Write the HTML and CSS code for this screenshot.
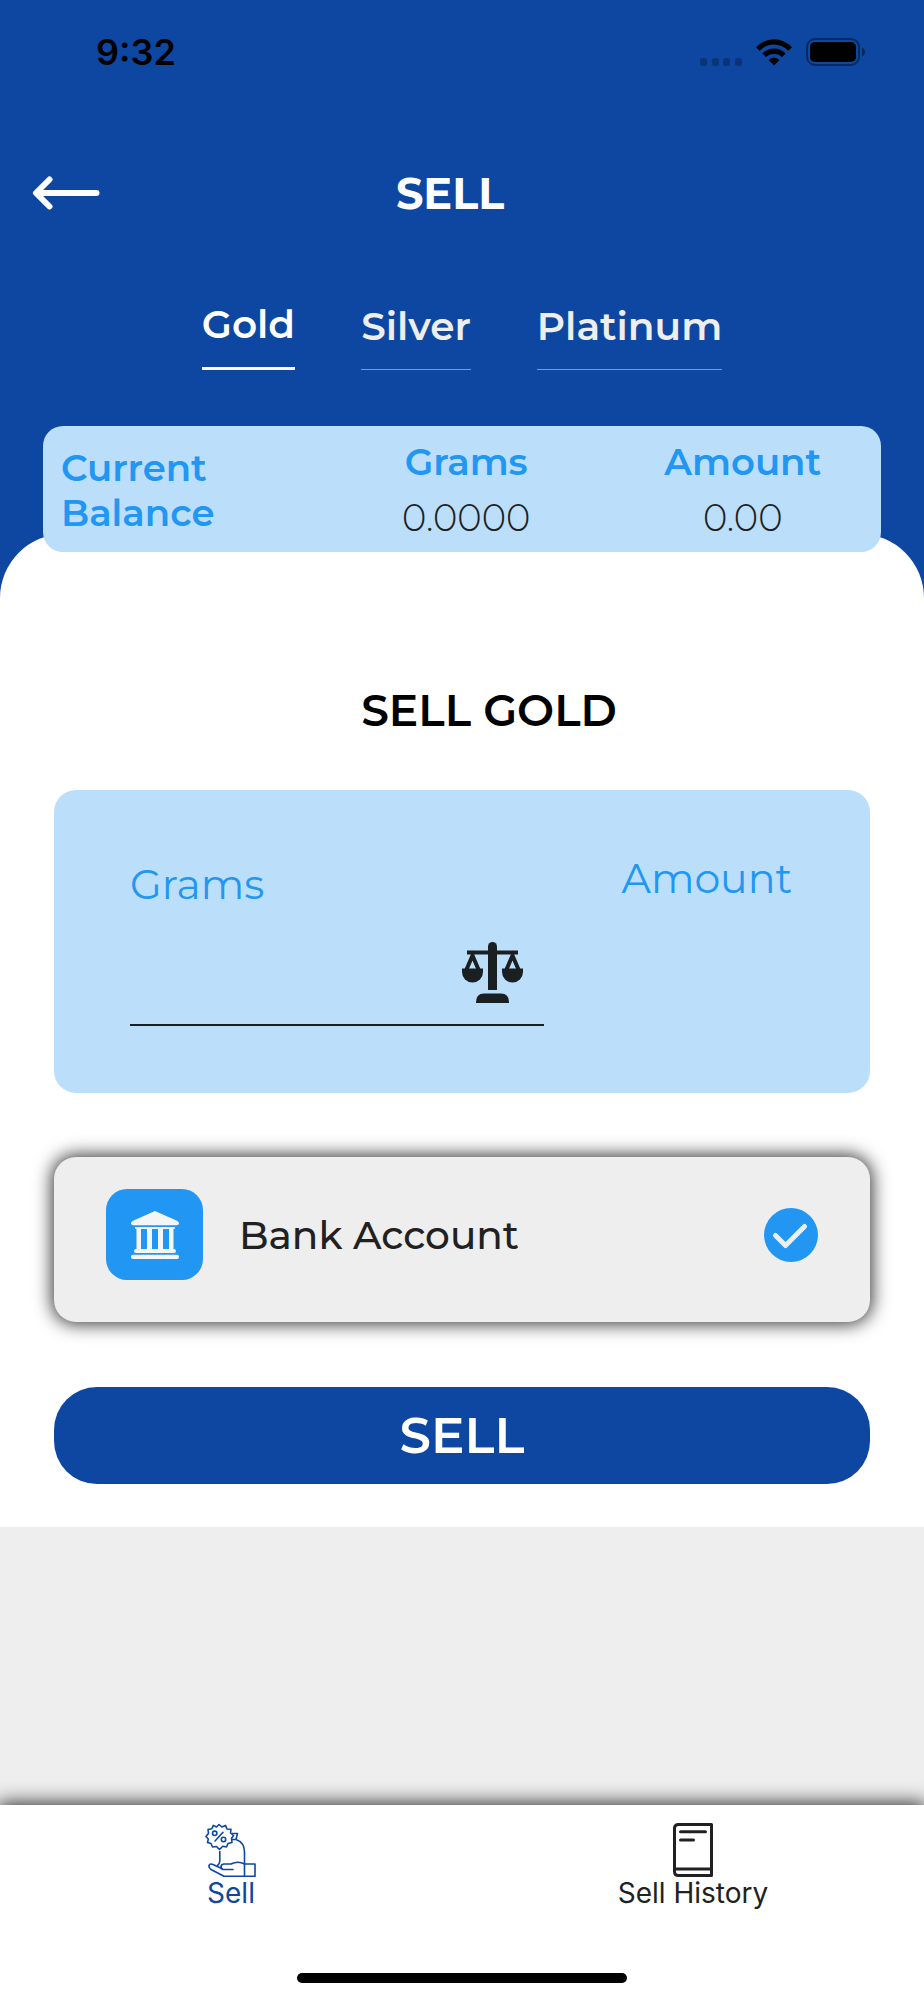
FILE: index.html
```html
<!DOCTYPE html>
<html lang="en">
<head>
  <meta charset="UTF-8">
  <title>Sell</title>
  <meta name="viewport" content="width=device-width, initial-scale=1.0">
  <link rel="stylesheet" href="styles.css">
</head>
<body>

  <header class="hero">
    <div class="status-bar">
      <span class="time">9:32</span>
      <div class="status-icons">
        <svg class="signal" width="42" height="8" viewBox="0 0 42 8">
          <rect x="0" y="0" width="7" height="8" rx="2.5"/>
          <rect x="12" y="0" width="7" height="8" rx="2.5"/>
          <rect x="23" y="0" width="7" height="8" rx="2.5"/>
          <rect x="35" y="0" width="7" height="8" rx="2.5"/>
        </svg>
        <svg width="36" height="27" viewBox="0 0 36 27">
          <path d="M0 8.2 Q8 0.3 18 0.3 T36 8.2 L32.3 11.8 Q26 5.6 18 5.6 T3.7 11.8 Z"/>
          <path d="M6.3 14.4 Q11.5 9.4 18 9.4 T29.7 14.4 L26 18 Q22.5 14.8 18 14.8 T10 18 Z"/>
          <path d="M12.6 20.9 Q15 18.4 18 18.4 T23.4 20.9 L18 26.5 Z"/>
        </svg>
        <svg width="60" height="28" viewBox="0 0 60 28">
          <rect class="battery-case" x="1" y="1" width="52" height="26" rx="8"/>
          <rect x="4" y="4" width="46" height="20" rx="5"/>
          <path class="battery-tip" d="M56 9.5 Q59 11 59 14 T56 18.5 Z"/>
        </svg>
      </div>
    </div>

    <div class="title-bar">
      <a class="back" href="#" aria-label="Back">
        <svg width="68" height="34" viewBox="0 0 68 34">
          <path d="M17.5 3.5 L4 17 L17.5 30.5 M5 17 H64.5"/>
        </svg>
      </a>
      <h1>SELL</h1>
    </div>

    <nav class="metals">
      <a class="active" href="#">Gold</a>
      <a href="#">Silver</a>
      <a href="#">Platinum</a>
    </nav>

    <section class="balance">
      <h2>Current Balance</h2>
      <div class="balance-item">
        <h3>Grams</h3>
        <p>0.0000</p>
      </div>
      <div class="balance-item">
        <h3>Amount</h3>
        <p>0.00</p>
      </div>
    </section>
  </header>

  <main class="sheet">
    <h2 class="sheet-title">SELL GOLD</h2>

    <form>
      <div class="quantity">
        <div class="grams">
          <label for="grams">Grams</label>
          <div class="grams-field">
            <input type="text" id="grams" inputmode="decimal">
            <svg width="61" height="61" viewBox="0 0 61 61">
              <path d="M26 4.5 a4.5 4.5 0 0 1 9 0 V48 H26 Z"/>
              <rect x="5" y="8.5" width="51" height="4"/>
              <path class="chain" d="M4.5 27.5 L10.5 13.5 L16.5 27.5 M44.5 27.5 L50.5 13.5 L56.5 27.5"/>
              <path d="M0 26.5 H21 V30 a10.5 10.5 0 0 1 -21 0 Z"/>
              <path d="M40 26.5 H61 V30 a10.5 10.5 0 0 1 -21 0 Z"/>
              <path d="M14 61 V60 Q14 51.5 22 51.5 H39 Q47 51.5 47 60 V61 Z"/>
            </svg>
          </div>
        </div>
        <div class="amount">
          <label for="amount">Amount</label>
          <output id="amount" for="grams"></output>
        </div>
      </div>

      <label class="account">
        <span class="account-icon">
          <svg width="48" height="48" viewBox="0 0 48 48">
            <path d="M24 0 L46 9.8 Q48 10.8 48 12.3 Q48 14.3 45.5 14.3 H2.5 Q0 14.3 0 12.3 Q0 10.8 2 9.8 Z"/>
            <path d="M4 16 H44 V17 Q44 18 42.5 18 V38 H43 a2 2 0 0 1 0 4 H5 a2 2 0 0 1 0 -4 H5.5 V18 Q4 18 4 17 Z M10 18 V38 H16 V18 Z M21 18 V38 H27 V18 Z M32 18 V38 H38 V18 Z" fill-rule="evenodd"/>
            <rect x="0" y="43.7" width="48" height="4.3" rx="2.1"/>
          </svg>
        </span>
        <span class="account-name">Bank Account</span>
        <span class="check">
          <input type="checkbox" checked>
          <svg width="54" height="54" viewBox="0 0 54 54">
            <path d="M11.5 27.5 L21.5 37.5 L40.5 18.5"/>
          </svg>
        </span>
      </label>

      <button class="sell-button" type="button">SELL</button>
    </form>
  </main>

  <footer class="tab-bar">
    <nav class="tabs">
      <a class="active" href="#">
        <svg width="52" height="54" viewBox="0 0 52 54">
          <path d="M14 1.5 L17 4 L20.5 2.4 L22 6 L26 6.3 L25.5 10 L28.5 12.5 L26.5 15.5 L27 19.5 L23 20.5 L21.5 24 L17.8 23.3 L14.5 26.5 L11.5 23.5 L7.5 24 L6 20.5 L2.5 19.5 L3.3 16 L1 13.5 L3.5 10.3 L3 6.5 L6.8 5.8 L8.3 2.4 L11.5 4 Z"/>
          <circle cx="9.7" cy="10.3" r="2.2"/>
          <circle cx="18.5" cy="16.5" r="2.2"/>
          <path d="M18 9.3 L10 18"/>
          <path d="M27 10.5 H32.5 L31 16.5 H27.5 M31 16.5 Q39.5 19.5 39.5 29 V53"/>
          <path d="M14.8 28.5 V38 Q14.8 41 12.5 42.5"/>
          <path d="M28 46.5 H18 Q16 45.5 16 43.5 Q16.5 41 19 41 H26 Q33 37.5 39.5 41 H50 V53.3 H19 L6 46.5 Q3.5 44.5 4 42.5 Q5 40 8 41.5 L14.5 44.5 Q16 45.8 18 46.5"/>
        </svg>
        Sell
      </a>
      <a href="#">
        <svg width="40" height="54" viewBox="0 0 40 54">
          <path class="book" d="M38.5 1.5 H5.5 Q1.5 1.5 1.5 5.5 V48.5 Q1.5 52.5 5.5 52.5 H38.5 Z M1.5 46 H38.5 M7.5 8.7 H32.5 M7.5 17 H20.5"/>
        </svg>
        Sell History
      </a>
    </nav>
    <div class="home-indicator"></div>
  </footer>

</body>
</html>
```

FILE: styles.css
```css
* {
  box-sizing: border-box;
}
body {
  font-family: Montserrat, Inter, sans-serif;
  margin: 0;
  background: #eee;
  color: #212121;
  display: flex;
  flex-direction: column;
  min-height: 100vh;
}
h1, h2, h3, p {
  margin: 0;
}
a {
  text-decoration: none;
}
svg {
  display: block;
  flex: none;
}

/* Blue top area */
.hero {
  background: #0d47a1;
  color: #fff;
  padding-bottom: 46px;
}
.status-bar {
  height: 104px;
  padding: 0 58px 0 96px;
  display: flex;
  justify-content: space-between;
  align-items: center;
  color: #000;
}
.time {
  font-family: Inter, sans-serif;
  font-size: 36px;
  font-weight: 600;
}
.status-icons {
  display: flex;
  align-items: center;
  gap: 14px;
}
.signal {
  opacity: 0.25;
  align-self: flex-end;
}
.battery-case {
  fill: none;
  stroke: #000;
  stroke-opacity: 0.4;
  stroke-width: 2;
}
.battery-tip {
  fill-opacity: 0.4;
}
.title-bar {
  margin-top: 49px;
  padding: 0 56px 0 32px;
  height: 80px;
  display: grid;
  grid-template-columns: 1fr auto 1fr;
  align-items: center;
}
.title-bar h1 {
  font-size: 43px;
  font-weight: 700;
}
.back path {
  fill: none;
  stroke: #fff;
  stroke-width: 6;
  stroke-linecap: round;
  stroke-linejoin: round;
}
.metals {
  margin-top: 67px;
  display: flex;
  justify-content: center;
  align-items: flex-end;
  gap: 66px;
}
.metals a {
  color: #eee;
  font-size: 39px;
  font-weight: 600;
  line-height: 48px;
  padding-bottom: 19px;
  border-bottom: 1px solid #6f9bd8;
}
.metals .active {
  color: #fff;
  border-bottom: 3px solid #fff;
}
.balance {
  position: relative;
  z-index: 1;
  margin: 56px 43px 0;
  padding: 13px 0 12px;
  display: grid;
  grid-template-columns: 34fr 33fr 33fr;
  align-items: center;
  border-radius: 20px;
  background: #bbdefb;
  color: #2196f3;
}
.balance h2, .balance h3 {
  font-size: 37px;
  font-weight: 600;
  line-height: 45px;
}
.balance h2 {
  padding-left: 18px;
}
.balance-item {
  display: grid;
  gap: 11px;
  text-align: center;
}
.balance p {
  color: #212121;
  font-size: 37px;
  font-weight: 300;
  line-height: 45px;
}

/* White sheet with the form */
.sheet {
  margin-top: -64px;
  padding: 148px 54px 43px;
  border-radius: 64px 64px 0 0;
  background: #fff;
}
.sheet-title {
  padding-left: 54px;
  margin-bottom: 52px;
  color: #000;
  font-size: 44px;
  font-weight: 600;
  line-height: 56px;
  text-align: center;
}
.quantity {
  padding: 62px 0 67px;
  display: grid;
  grid-template-columns: 3fr 2fr;
  border-radius: 22px;
  background: #bbdefb;
}
.quantity label {
  color: #2196f3;
  font-size: 41px;
  font-weight: 400;
  line-height: 52px;
}
.grams {
  min-width: 0;
  padding: 6px 0 0 76px;
  display: flex;
  flex-direction: column;
  gap: 11px;
}
.grams-field {
  height: 105px;
  padding-right: 21px;
  display: flex;
  align-items: center;
  border-bottom: 2px solid #1a1f21;
}
.grams-field input {
  flex: 1;
  min-width: 0;
  height: 60px;
  border: none;
  outline: none;
  background: none;
  font: inherit;
  font-size: 37px;
}
.grams-field svg {
  fill: #1a1f21;
}
.chain {
  fill: none;
  stroke: #1a1f21;
  stroke-width: 4;
}
.amount {
  text-align: center;
}
.account {
  margin-top: 64px;
  padding: 32px 52px 42px;
  min-height: 165px;
  display: flex;
  align-items: center;
  gap: 36px;
  border-radius: 22px;
  background: #eee;
  box-shadow: 0 0 18px 2px rgba(0, 0, 0, 0.8);
}
.account-icon {
  width: 97px;
  height: 91px;
  display: grid;
  place-items: center;
  border-radius: 21px;
  background: #2196f3;
  fill: #f5f5f5;
}
.account-name {
  flex: 1;
  font-size: 39px;
  font-weight: 500;
}
.check {
  display: grid;
}
.check input {
  grid-area: 1 / 1;
  appearance: none;
  width: 54px;
  height: 54px;
  margin: 0;
  border-radius: 50%;
  background: #2196f3;
}
.check svg {
  grid-area: 1 / 1;
  z-index: 1;
  pointer-events: none;
  fill: none;
  stroke: #eee;
  stroke-width: 5;
  stroke-linecap: round;
  stroke-linejoin: round;
}
.sell-button {
  width: 100%;
  height: 97px;
  margin-top: 65px;
  display: block;
  border: none;
  border-radius: 43px;
  background: #0d47a1;
  color: #fff;
  font: inherit;
  font-size: 50px;
  font-weight: 600;
  cursor: pointer;
}

/* Bottom navigation */
.tab-bar {
  margin-top: auto;
  padding: 18px 0 17px;
  display: flex;
  flex-direction: column;
  align-items: center;
  gap: 64px;
  background: #fff;
  box-shadow: 0 0 18px 2px rgba(0, 0, 0, 0.8);
}
.tabs {
  width: 100%;
  display: grid;
  grid-template-columns: 1fr 1fr;
}
.tabs a {
  display: flex;
  flex-direction: column;
  align-items: center;
  color: #212121;
  font-family: Inter, sans-serif;
  font-size: 28px;
  line-height: 32px;
}
.tabs .active {
  color: #0d47a1;
}
.tabs svg {
  fill: none;
  stroke: currentColor;
  stroke-width: 1.6;
  stroke-linejoin: round;
  stroke-linecap: round;
}
.tabs .book {
  stroke-width: 3;
}
.home-indicator {
  width: 330px;
  height: 10px;
  border-radius: 5px;
  background: #000;
}
```
